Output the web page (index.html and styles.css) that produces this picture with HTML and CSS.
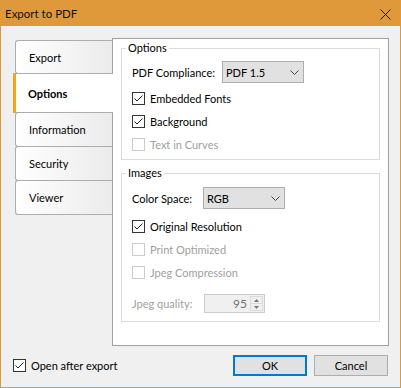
FILE: index.html
```html
<!DOCTYPE html>
<html lang="en">
<head>
  <meta charset="UTF-8" />
  <title>Export to PDF</title>
  <link rel="stylesheet" href="styles.css">
</head>
<body>
  <div class="window">
    <div class="titlebar">
      <span class="title">Export to PDF</span>
      <svg class="close" width="11" height="11" viewBox="0 0 11 11">
        <path d="M0.5 0.5 L10.5 10.5 M10.5 0.5 L0.5 10.5" stroke="#111" stroke-width="1" fill="none" />
      </svg>
    </div>

    <div class="main">
      <div class="tabs">
        <div class="tab">Export</div>
        <div class="tab active">Options</div>
        <div class="tab">Information</div>
        <div class="tab">Security</div>
        <div class="tab">Viewer</div>
      </div>

      <div class="panel">
        <fieldset class="group options">
          <legend>Options</legend>
          <div class="combo-row">
            <span class="combo-label">PDF Compliance:</span>
            <div class="combo">
              <span>PDF 1.5</span>
              <svg width="9" height="5" viewBox="0 0 9 5"><polyline points="0.5,0.5 4.5,4.5 8.5,0.5" fill="none" stroke="#444" /></svg>
            </div>
          </div>
          <div class="check">
            <span class="box"><svg width="11" height="11" viewBox="0 0 11 11"><polyline points="1.5,5.5 4,8 9.5,2.5" fill="none" stroke="#222" /></svg></span>
            <span>Embedded Fonts</span>
          </div>
          <div class="check">
            <span class="box"><svg width="11" height="11" viewBox="0 0 11 11"><polyline points="1.5,5.5 4,8 9.5,2.5" fill="none" stroke="#222" /></svg></span>
            <span>Background</span>
          </div>
          <div class="check disabled">
            <span class="box"></span>
            <span>Text in Curves</span>
          </div>
        </fieldset>

        <fieldset class="group images">
          <legend>Images</legend>
          <div class="combo-row">
            <span class="combo-label">Color Space:</span>
            <div class="combo">
              <span>RGB</span>
              <svg width="9" height="5" viewBox="0 0 9 5"><polyline points="0.5,0.5 4.5,4.5 8.5,0.5" fill="none" stroke="#444" /></svg>
            </div>
          </div>
          <div class="check">
            <span class="box"><svg width="11" height="11" viewBox="0 0 11 11"><polyline points="1.5,5.5 4,8 9.5,2.5" fill="none" stroke="#222" /></svg></span>
            <span>Original Resolution</span>
          </div>
          <div class="check disabled">
            <span class="box"></span>
            <span>Print Optimized</span>
          </div>
          <div class="check disabled">
            <span class="box"></span>
            <span>Jpeg Compression</span>
          </div>
          <div class="quality">
            <span class="combo-label">Jpeg quality:</span>
            <div class="spin">
              <span class="spin-value">95</span>
              <div class="spin-btns">
                <div class="spin-btn"><svg width="5" height="3" viewBox="0 0 5 3"><polygon points="2.5,0 5,3 0,3" fill="#777" /></svg></div>
                <div class="spin-btn"><svg width="5" height="3" viewBox="0 0 5 3"><polygon points="0,0 5,0 2.5,3" fill="#777" /></svg></div>
              </div>
            </div>
          </div>
        </fieldset>
      </div>
    </div>

    <div class="footer">
      <div class="check open-after">
        <span class="box"><svg width="11" height="11" viewBox="0 0 11 11"><polyline points="1.5,5.5 4,8 9.5,2.5" fill="none" stroke="#222" /></svg></span>
        <span>Open after export</span>
      </div>
      <button class="btn default">OK</button>
      <button class="btn">Cancel</button>
    </div>
  </div>
</body>
</html>
```
FILE: styles.css
```css
* {
  box-sizing: border-box;
}
body {
  margin: 0;
  font-family: "Lato", "Liberation Sans", sans-serif;
  font-size: 11px;
  color: #000;
}
.window {
  width: 401px;
  height: 388px;
  border: 1px solid #e0993a;
  border-top: 0;
  background: #f0f0f0;
  display: flex;
  flex-direction: column;
}
.titlebar {
  height: 26px;
  background: #e0993a;
  display: flex;
  align-items: center;
  justify-content: space-between;
  padding: 0 9px 0 4px;
  font-size: 11.5px;
  color: #111;
}
.close {
  margin-top: 2px;
}

/* tabs + page */
.main {
  display: flex;
  padding: 12px 11px 0 12px;
}
.tabs {
  width: 99px;
  flex: none;
  padding-top: 2px;
  display: flex;
  flex-direction: column;
}
.tab {
  height: 35px;
  margin-top: -1px;
  margin-left: 2px;
  padding-left: 13px;
  border: 1px solid #adadad;
  border-right: 0;
  border-radius: 3px 0 0 3px;
  background: linear-gradient(to right, #ffffff, #ebebeb);
  display: flex;
  align-items: center;
}
.tab:first-child {
  margin-top: 0;
  height: 34px;
}
.tab.active {
  height: 40px;
  margin-left: 0;
  margin-right: -1px;
  padding-left: 12px;
  border-left: 3px solid #f7a413;
  border-radius: 0;
  background: #fff;
  font-weight: bold;
  position: relative;
  z-index: 1;
}
.panel {
  flex: 1;
  height: 308px;
  border: 1px solid #a0a0a0;
  background: #fff;
  padding: 2px 8px 0;
}

/* group boxes */
.group {
  margin: 0;
  border: 1px solid #dcdcdc;
  padding: 6px 0 3px 10px;
}
.group legend {
  padding: 0 2px;
  margin-left: -6px;
  line-height: 14px;
}
.group.images {
  margin-top: 6px;
  padding-bottom: 8px;
}
.combo-row {
  display: flex;
  align-items: center;
  height: 22px;
  margin-bottom: 4px;
}
.images .combo-row {
  margin-top: 1px;
  margin-bottom: 6px;
}
.combo-label {
  flex: none;
  width: 90px;
}
.images .combo-label {
  width: 71px;
}
.quality .combo-label {
  width: 72px;
}
.combo {
  width: 82px;
  height: 22px;
  border: 1px solid #adadad;
  background: #e1e1e1;
  display: flex;
  align-items: center;
  justify-content: space-between;
  padding: 0 4px 0 3px;
}

/* checkboxes */
.check {
  display: flex;
  align-items: center;
  gap: 5px;
  height: 23px;
}
.box {
  width: 13px;
  height: 13px;
  flex: none;
  border: 1px solid #333;
  background: #fff;
}
.box svg {
  display: block;
}
.check.disabled {
  color: #a0a0a0;
}
.check.disabled .box {
  border-color: #cccccc;
}

/* spin box */
.quality {
  display: flex;
  align-items: center;
  height: 19px;
  margin-top: 10px;
  color: #a0a0a0;
}
.spin {
  width: 61px;
  height: 19px;
  border: 1px solid #cccccc;
  background: #f0f0f0;
  display: flex;
}
.spin-value {
  flex: 1;
  text-align: right;
  padding-right: 3px;
  line-height: 17px;
  font-size: 12px;
  color: #707070;
}
.spin-btns {
  width: 13px;
  margin: 1px 1px 1px 0;
  display: flex;
  flex-direction: column;
}
.spin-btn {
  flex: 1;
  border: 1px solid #dadada;
  display: flex;
  align-items: center;
  justify-content: center;
}
.spin-btn + .spin-btn {
  border-top: 0;
}
.spin-btn svg {
  display: block;
}

/* footer */
.footer {
  display: flex;
  align-items: center;
  padding: 8px 12px 0 12px;
}
.open-after {
  flex: 1;
}
.btn {
  width: 74px;
  height: 21px;
  border: 1px solid #adadad;
  background: #e1e1e1;
  font-family: inherit;
  font-size: 11px;
  color: #000;
  padding: 0;
}
.btn.default {
  border: 2px solid #0078d7;
}
.btn + .btn {
  margin-left: 7px;
}
```
